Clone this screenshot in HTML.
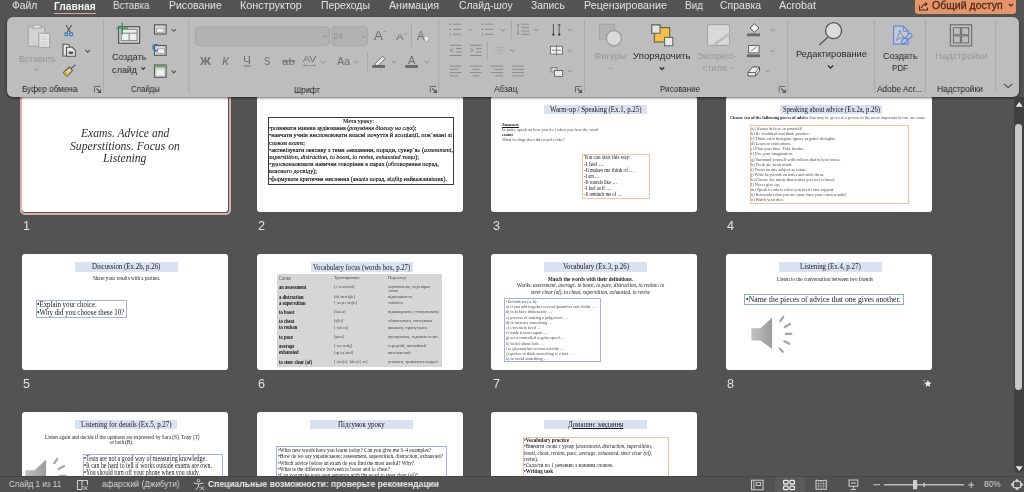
<!DOCTYPE html><html><head><meta charset="utf-8"><style>
html,body{margin:0;padding:0;}
body{width:1024px;height:492px;overflow:hidden;position:relative;background:#525352;font-family:'Liberation Sans', sans-serif;}
.t{position:absolute;white-space:nowrap;line-height:1;transform-origin:0 0;will-change:transform;}
.r{position:absolute;}
svg.r{overflow:visible;}
.sl{position:absolute;background:#fff;border-radius:3px;overflow:hidden;width:206px;height:116px;}
.sl .t{will-change:auto;}
.sl{will-change:transform;}
</style></head><body>
<div class="r" style="left:0px;top:0px;width:1024px;height:17px;background:#535453;"></div>
<div class="t" style="left:12.00px;top:1.44px;font-size:10.3px;font-weight:normal;font-family:'Liberation Sans', sans-serif;font-style:normal;color:#e2e2e2;transform:scaleX(0.9831);">Файл</div>
<div class="t" style="left:53.60px;top:1.53px;font-size:10.2px;font-weight:bold;font-family:'Liberation Sans', sans-serif;font-style:normal;color:#f6f6f6;transform:scaleX(1.0087);">Главная</div>
<div class="t" style="left:112.50px;top:1.44px;font-size:10.3px;font-weight:normal;font-family:'Liberation Sans', sans-serif;font-style:normal;color:#e2e2e2;transform:scaleX(0.9535);">Вставка</div>
<div class="t" style="left:168.80px;top:1.44px;font-size:10.3px;font-weight:normal;font-family:'Liberation Sans', sans-serif;font-style:normal;color:#e2e2e2;transform:scaleX(1.0162);">Рисование</div>
<div class="t" style="left:239.70px;top:1.44px;font-size:10.3px;font-weight:normal;font-family:'Liberation Sans', sans-serif;font-style:normal;color:#e2e2e2;transform:scaleX(1.0525);">Конструктор</div>
<div class="t" style="left:320.60px;top:1.44px;font-size:10.3px;font-weight:normal;font-family:'Liberation Sans', sans-serif;font-style:normal;color:#e2e2e2;transform:scaleX(1.0125);">Переходы</div>
<div class="t" style="left:389.00px;top:1.44px;font-size:10.3px;font-weight:normal;font-family:'Liberation Sans', sans-serif;font-style:normal;color:#e2e2e2;transform:scaleX(1.0343);">Анимация</div>
<div class="t" style="left:459.00px;top:1.44px;font-size:10.3px;font-weight:normal;font-family:'Liberation Sans', sans-serif;font-style:normal;color:#e2e2e2;transform:scaleX(1.0058);">Слайд-шоу</div>
<div class="t" style="left:530.80px;top:1.44px;font-size:10.3px;font-weight:normal;font-family:'Liberation Sans', sans-serif;font-style:normal;color:#e2e2e2;transform:scaleX(0.9971);">Запись</div>
<div class="t" style="left:583.60px;top:1.44px;font-size:10.3px;font-weight:normal;font-family:'Liberation Sans', sans-serif;font-style:normal;color:#e2e2e2;transform:scaleX(1.0426);">Рецензирование</div>
<div class="t" style="left:684.70px;top:1.44px;font-size:10.3px;font-weight:normal;font-family:'Liberation Sans', sans-serif;font-style:normal;color:#e2e2e2;transform:scaleX(0.9710);">Вид</div>
<div class="t" style="left:719.60px;top:1.44px;font-size:10.3px;font-weight:normal;font-family:'Liberation Sans', sans-serif;font-style:normal;color:#e2e2e2;transform:scaleX(1.0196);">Справка</div>
<div class="t" style="left:778.50px;top:1.44px;font-size:10.3px;font-weight:normal;font-family:'Liberation Sans', sans-serif;font-style:normal;color:#e2e2e2;transform:scaleX(1.0423);">Acrobat</div>
<div class="r" style="left:53.6px;top:12.6px;width:42.7px;height:1.6px;background:#d9a3a3;border-radius:1px;"></div>
<div class="r" style="left:914.5px;top:-4px;width:101.7px;height:18.3px;background:#e5956a;border-radius:3px;"></div>
<div class="t" style="left:931.70px;top:0.63px;font-size:10.2px;font-weight:normal;font-family:'Liberation Sans', sans-serif;font-style:normal;color:#4f2c1c;transform:scaleX(1.0314);-webkit-text-stroke:0.3px #4f2c1c;">Общий доступ</div>
<svg class="r" style="left:917px;top:1px;" width="12" height="10" viewBox="0 0 12 10"><path d="M2.5 4.5 V9 H10.5 V6.5" fill="none" stroke="#4a2818" stroke-width="1.1"/><path d="M4.5 7 Q5.5 3.2 9.5 3 M8 1.3 L10 3 L8 4.8" fill="none" stroke="#4a2818" stroke-width="1.1"/></svg>
<svg class="r" style="left:1008px;top:3px;" width="6" height="4" viewBox="0 0 6 4"><path d="M1 1 L3 3 L5 1" fill="none" stroke="#4a2818" stroke-width="1.1"/></svg>
<div class="r" style="left:19.5px;top:93.5px;width:211px;height:121px;border:2.5px solid #e2aea8;border-radius:5px;box-sizing:border-box;"></div>
<div class="sl" style="left:22px;top:96px;">
<div class="t" style="left:59.00px;top:31.57px;font-size:11.6px;font-weight:normal;font-family:'Liberation Serif', serif;font-style:italic;color:#2e2e2e;transform:scaleX(0.9997);">Exams. Advice and</div>
<div class="t" style="left:48.00px;top:44.67px;font-size:11.6px;font-weight:normal;font-family:'Liberation Serif', serif;font-style:italic;color:#2e2e2e;transform:scaleX(1.0056);">Superstitions. Focus on</div>
<div class="t" style="left:81.40px;top:56.77px;font-size:11.6px;font-weight:normal;font-family:'Liberation Serif', serif;font-style:italic;color:#2e2e2e;transform:scaleX(1.0053);">Listening</div>
</div>
<div class="t" style="left:23.20px;top:219.89px;font-size:12.6px;font-weight:normal;font-family:'Liberation Sans', sans-serif;font-style:normal;color:#e2e2e2;">1</div>
<div class="sl" style="left:256.7px;top:96px;">
<div class="r" style="left:10.5px;top:21px;width:186.5px;height:67.5px;border:1px solid #3a3a3a;box-sizing:border-box;"></div>
<div class="t" style="left:85.80px;top:22.32px;font-size:6.72px;font-weight:bold;font-family:'Liberation Serif', serif;font-style:normal;color:#1a1a1a;transform:scaleX(0.8287);">Мета уроку:</div>
<div class="t" style="left:12.40px;top:29.12px;font-size:6.72px;font-weight:normal;font-family:'Liberation Serif', serif;font-style:normal;color:#000;transform:scaleX(0.8846);-webkit-text-stroke:0.12px #000;">•розвивати навики аудіювання (<i>розуміння діалогу на слух</i>);</div>
<div class="t" style="left:12.40px;top:36.32px;font-size:6.72px;font-weight:normal;font-family:'Liberation Serif', serif;font-style:normal;color:#000;transform:scaleX(0.9364);-webkit-text-stroke:0.12px #000;">•навчати учнів висловлювати власні почуття й асоціації, пов`язані зі</div>
<div class="t" style="left:12.40px;top:43.52px;font-size:6.72px;font-weight:normal;font-family:'Liberation Serif', serif;font-style:normal;color:#000;transform:scaleX(0.8855);-webkit-text-stroke:0.12px #000;">словом <i>exams</i>;</div>
<div class="t" style="left:12.40px;top:50.72px;font-size:6.72px;font-weight:normal;font-family:'Liberation Serif', serif;font-style:normal;color:#000;transform:scaleX(0.9175);-webkit-text-stroke:0.12px #000;">•активізувати лексику з теми «екзамени, поради, сувер`я» (<i>assessment,</i></div>
<div class="t" style="left:12.40px;top:57.92px;font-size:6.72px;font-weight:normal;font-family:'Liberation Serif', serif;font-style:normal;color:#000;transform:scaleX(0.9044);-webkit-text-stroke:0.12px #000;"><i>superstition, distraction, to boost, to revise, exhausted</i> тощо);</div>
<div class="t" style="left:12.40px;top:65.12px;font-size:6.72px;font-weight:normal;font-family:'Liberation Serif', serif;font-style:normal;color:#000;transform:scaleX(0.9118);-webkit-text-stroke:0.12px #000;">•удосконалювати навички говоріння в парах (обговорення порад,</div>
<div class="t" style="left:12.40px;top:72.32px;font-size:6.72px;font-weight:normal;font-family:'Liberation Serif', serif;font-style:normal;color:#000;transform:scaleX(0.9083);-webkit-text-stroke:0.12px #000;">власного досвіду);</div>
<div class="t" style="left:12.40px;top:79.52px;font-size:6.72px;font-weight:normal;font-family:'Liberation Serif', serif;font-style:normal;color:#000;transform:scaleX(0.8823);-webkit-text-stroke:0.12px #000;">•формувати критичне мислення (аналіз порад, відбір найважливіших).</div>
</div>
<div class="t" style="left:257.90px;top:219.89px;font-size:12.6px;font-weight:normal;font-family:'Liberation Sans', sans-serif;font-style:normal;color:#e2e2e2;">2</div>
<div class="sl" style="left:491.3px;top:96px;">
<div class="r" style="left:53px;top:8.5px;width:102.5px;height:9.1px;background:#dae1f0;"></div>
<div class="t" style="left:58.70px;top:9.57px;font-size:7.39px;font-weight:normal;font-family:'Liberation Serif', serif;font-style:normal;color:#1a1a1a;transform:scaleX(0.9343);">Warm-up / Speaking (Ex.1, p.25)</div>
<div class="t" style="left:11.00px;top:27.20px;font-size:4.82px;font-weight:bold;font-family:'Liberation Serif', serif;font-style:normal;color:#1a1a1a;transform:scaleX(0.7716);text-decoration:underline;">Завдання:</div>
<div class="t" style="left:11.00px;top:32.30px;font-size:4.82px;font-weight:normal;font-family:'Liberation Serif', serif;font-style:normal;color:#4a4a4a;transform:scaleX(0.8890);">In pairs, speak on how you feel when you hear the word</div>
<div class="t" style="left:11.00px;top:37.30px;font-size:4.82px;font-weight:bold;font-family:'Liberation Serif', serif;font-style:normal;color:#1a1a1a;transform:scaleX(0.8564);">exams</div>
<div class="t" style="left:11.00px;top:42.20px;font-size:4.82px;font-weight:normal;font-family:'Liberation Serif', serif;font-style:normal;color:#4a4a4a;transform:scaleX(0.8835);">What feelings does this word evoke?</div>
<div class="r" style="left:91px;top:57.9px;width:68.2px;height:45.6px;border:1px solid #f4bf9c;box-sizing:border-box;"></div>
<div class="t" style="left:92.50px;top:59.47px;font-size:5.94px;font-weight:normal;font-family:'Liberation Serif', serif;font-style:normal;color:#1a1a1a;transform:scaleX(0.8605);">You can start this way:</div>
<div class="t" style="left:92.50px;top:65.57px;font-size:5.94px;font-weight:normal;font-family:'Liberation Serif', serif;font-style:normal;color:#1a1a1a;transform:scaleX(0.9189);">-I feel …</div>
<div class="t" style="left:92.50px;top:71.67px;font-size:5.94px;font-weight:normal;font-family:'Liberation Serif', serif;font-style:normal;color:#1a1a1a;transform:scaleX(0.8574);">-It makes me think of …</div>
<div class="t" style="left:92.50px;top:77.77px;font-size:5.94px;font-weight:normal;font-family:'Liberation Serif', serif;font-style:normal;color:#1a1a1a;transform:scaleX(0.7702);">-I am …</div>
<div class="t" style="left:92.50px;top:83.87px;font-size:5.94px;font-weight:normal;font-family:'Liberation Serif', serif;font-style:normal;color:#1a1a1a;transform:scaleX(0.7970);">-It sounds like …</div>
<div class="t" style="left:92.50px;top:89.97px;font-size:5.94px;font-weight:normal;font-family:'Liberation Serif', serif;font-style:normal;color:#1a1a1a;transform:scaleX(0.8105);">-I feel as if …</div>
<div class="t" style="left:92.50px;top:96.07px;font-size:5.94px;font-weight:normal;font-family:'Liberation Serif', serif;font-style:normal;color:#1a1a1a;transform:scaleX(0.7785);">-It reminds me of …</div>
</div>
<div class="t" style="left:492.50px;top:219.89px;font-size:12.6px;font-weight:normal;font-family:'Liberation Sans', sans-serif;font-style:normal;color:#e2e2e2;">3</div>
<div class="sl" style="left:726px;top:96px;">
<div class="r" style="left:53.6px;top:8.5px;width:102.4px;height:9.5px;background:#dae1f0;"></div>
<div class="t" style="left:57.00px;top:9.97px;font-size:7.39px;font-weight:normal;font-family:'Liberation Serif', serif;font-style:normal;color:#1a1a1a;transform:scaleX(0.9055);">Speaking about advice (Ex.2a, p.26)</div>
<div class="t" style="left:3.60px;top:20.30px;font-size:4.82px;font-weight:normal;font-family:'Liberation Serif', serif;font-style:normal;color:#1a1a1a;transform:scaleX(0.8832);"><b>Choose ten of the following pieces of advice</b> <span style="color:#555">that may be given to a person as the most important before an exam:</span></div>
<div class="r" style="left:23.7px;top:28.5px;width:159.0px;height:79.7px;border:1px solid #f4bf9c;box-sizing:border-box;"></div>
<div class="t" style="left:25.20px;top:30.94px;font-size:4.77px;font-weight:normal;font-family:'Liberation Serif', serif;font-style:normal;color:#4a4a4a;transform:scaleX(0.8929);">a) Always believe in yourself!</div>
<div class="t" style="left:25.20px;top:36.04px;font-size:4.77px;font-weight:normal;font-family:'Liberation Serif', serif;font-style:normal;color:#4a4a4a;transform:scaleX(0.8929);">b) Be confident and think positive.</div>
<div class="t" style="left:25.20px;top:41.14px;font-size:4.77px;font-weight:normal;font-family:'Liberation Serif', serif;font-style:normal;color:#4a4a4a;transform:scaleX(0.8929);">c) Think calm thoughts; ignore negative thoughts.</div>
<div class="t" style="left:25.20px;top:46.24px;font-size:4.77px;font-weight:normal;font-family:'Liberation Serif', serif;font-style:normal;color:#4a4a4a;transform:scaleX(0.8929);">d) Learn to concentrate.</div>
<div class="t" style="left:25.20px;top:51.34px;font-size:4.77px;font-weight:normal;font-family:'Liberation Serif', serif;font-style:normal;color:#4a4a4a;transform:scaleX(0.8929);">e) Plan your time. Take breaks.</div>
<div class="t" style="left:25.20px;top:56.44px;font-size:4.77px;font-weight:normal;font-family:'Liberation Serif', serif;font-style:normal;color:#4a4a4a;transform:scaleX(0.8929);">f) Use your imagination.</div>
<div class="t" style="left:25.20px;top:61.54px;font-size:4.77px;font-weight:normal;font-family:'Liberation Serif', serif;font-style:normal;color:#4a4a4a;transform:scaleX(0.8929);">g) Surround yourself with colours that help to stress.</div>
<div class="t" style="left:25.20px;top:66.64px;font-size:4.77px;font-weight:normal;font-family:'Liberation Serif', serif;font-style:normal;color:#4a4a4a;transform:scaleX(0.8929);">h) Fresh air, fresh mind.</div>
<div class="t" style="left:25.20px;top:71.74px;font-size:4.77px;font-weight:normal;font-family:'Liberation Serif', serif;font-style:normal;color:#4a4a4a;transform:scaleX(0.8929);">i) Focus on one subject at a time.</div>
<div class="t" style="left:25.20px;top:76.84px;font-size:4.77px;font-weight:normal;font-family:'Liberation Serif', serif;font-style:normal;color:#4a4a4a;transform:scaleX(0.8929);">j) Write keywords on notes and stick them.</div>
<div class="t" style="left:25.20px;top:81.94px;font-size:4.77px;font-weight:normal;font-family:'Liberation Serif', serif;font-style:normal;color:#4a4a4a;transform:scaleX(0.8929);">k) Choose the music that makes you feel relaxed.</div>
<div class="t" style="left:25.20px;top:87.04px;font-size:4.77px;font-weight:normal;font-family:'Liberation Serif', serif;font-style:normal;color:#4a4a4a;transform:scaleX(0.8929);">l) Never give up.</div>
<div class="t" style="left:25.20px;top:92.14px;font-size:4.77px;font-weight:normal;font-family:'Liberation Serif', serif;font-style:normal;color:#4a4a4a;transform:scaleX(0.8929);">m) Speak to others when you need extra support.</div>
<div class="t" style="left:25.20px;top:97.24px;font-size:4.77px;font-weight:normal;font-family:'Liberation Serif', serif;font-style:normal;color:#4a4a4a;transform:scaleX(0.8929);">n) Remember that you are more than your exam results!</div>
<div class="t" style="left:25.20px;top:102.34px;font-size:4.77px;font-weight:normal;font-family:'Liberation Serif', serif;font-style:normal;color:#4a4a4a;transform:scaleX(0.8929);">o) Watch your diet.</div>
</div>
<div class="t" style="left:727.20px;top:219.89px;font-size:12.6px;font-weight:normal;font-family:'Liberation Sans', sans-serif;font-style:normal;color:#e2e2e2;">4</div>
<div class="sl" style="left:22px;top:254px;">
<div class="r" style="left:53px;top:8.3px;width:103px;height:9.4px;background:#dae1f0;"></div>
<div class="t" style="left:70.30px;top:9.47px;font-size:7.39px;font-weight:normal;font-family:'Liberation Serif', serif;font-style:normal;color:#1a1a1a;transform:scaleX(0.9352);">Discussion (Ex.2b, p.26)</div>
<div class="t" style="left:70.80px;top:21.78px;font-size:5.69px;font-weight:normal;font-family:'Liberation Serif', serif;font-style:normal;color:#1a1a1a;transform:scaleX(0.8938);">Share your results with a partner.</div>
<div class="r" style="left:14.2px;top:46px;width:91.2px;height:18.2px;border:1px solid #9fb3de;box-sizing:border-box;"></div>
<div class="t" style="left:15.30px;top:46.60px;font-size:7.95px;font-weight:normal;font-family:'Liberation Serif', serif;font-style:normal;color:#1a1a1a;transform:scaleX(0.8692);">•Explain your choice.</div>
<div class="t" style="left:15.30px;top:55.00px;font-size:7.95px;font-weight:normal;font-family:'Liberation Serif', serif;font-style:normal;color:#1a1a1a;transform:scaleX(0.8730);">•Why did you choose these 10?</div>
</div>
<div class="t" style="left:23.20px;top:377.89px;font-size:12.6px;font-weight:normal;font-family:'Liberation Sans', sans-serif;font-style:normal;color:#e2e2e2;">5</div>
<div class="sl" style="left:256.7px;top:254px;">
<div class="r" style="left:54.1px;top:8.3px;width:101.9px;height:10.1px;background:#dae1f0;"></div>
<div class="t" style="left:56.30px;top:9.97px;font-size:7.39px;font-weight:normal;font-family:'Liberation Serif', serif;font-style:normal;color:#1a1a1a;transform:scaleX(0.9217);">Vocabulary focus (words box, p.27)</div>
<div class="r" style="left:20.3px;top:20px;width:165.1px;height:92.7px;background:#d6d6d6;"></div>
<div class="t" style="left:22.00px;top:21.73px;font-size:5.15px;font-weight:normal;font-family:'Liberation Serif', serif;font-style:normal;color:#4a4a4a;transform:scaleX(0.8929);">Слово</div>
<div class="t" style="left:77.00px;top:21.91px;font-size:4.93px;font-weight:normal;font-family:'Liberation Serif', serif;font-style:normal;color:#4a4a4a;transform:scaleX(0.8929);">Транскрипція</div>
<div class="t" style="left:131.20px;top:21.91px;font-size:4.93px;font-weight:normal;font-family:'Liberation Serif', serif;font-style:normal;color:#4a4a4a;transform:scaleX(0.8929);">Переклад</div>
<div class="t" style="left:22.00px;top:30.73px;font-size:5.15px;font-weight:bold;font-family:'Liberation Serif', serif;font-style:normal;color:#111;transform:scaleX(0.8929);">an assessment</div>
<div class="t" style="left:77.00px;top:30.91px;font-size:4.93px;font-weight:normal;font-family:'Liberation Serif', serif;font-style:normal;color:#4a4a4a;transform:scaleX(0.8929);">[əˈsesmənt]</div>
<div class="t" style="left:131.20px;top:30.91px;font-size:4.93px;font-weight:normal;font-family:'Liberation Serif', serif;font-style:normal;color:#4a4a4a;transform:scaleX(0.8929);">оцінювання, перевірка</div>
<div class="t" style="left:131.20px;top:35.41px;font-size:4.93px;font-weight:normal;font-family:'Liberation Serif', serif;font-style:normal;color:#4a4a4a;transform:scaleX(0.8929);">знань</div>
<div class="t" style="left:22.00px;top:40.93px;font-size:5.15px;font-weight:bold;font-family:'Liberation Serif', serif;font-style:normal;color:#111;transform:scaleX(0.8929);">a distraction</div>
<div class="t" style="left:77.00px;top:41.11px;font-size:4.93px;font-weight:normal;font-family:'Liberation Serif', serif;font-style:normal;color:#4a4a4a;transform:scaleX(0.8929);">[dɪˈstrækʃn]</div>
<div class="t" style="left:131.20px;top:41.11px;font-size:4.93px;font-weight:normal;font-family:'Liberation Serif', serif;font-style:normal;color:#4a4a4a;transform:scaleX(0.8929);">відволікання</div>
<div class="t" style="left:22.00px;top:47.13px;font-size:5.15px;font-weight:bold;font-family:'Liberation Serif', serif;font-style:normal;color:#111;transform:scaleX(0.8929);">a superstition</div>
<div class="t" style="left:77.00px;top:47.31px;font-size:4.93px;font-weight:normal;font-family:'Liberation Serif', serif;font-style:normal;color:#4a4a4a;transform:scaleX(0.8929);">[ˌsuːpəˈstɪʃn]</div>
<div class="t" style="left:131.20px;top:47.31px;font-size:4.93px;font-weight:normal;font-family:'Liberation Serif', serif;font-style:normal;color:#4a4a4a;transform:scaleX(0.8929);">забобон</div>
<div class="t" style="left:22.00px;top:56.03px;font-size:5.15px;font-weight:bold;font-family:'Liberation Serif', serif;font-style:normal;color:#111;transform:scaleX(0.8929);">to boost</div>
<div class="t" style="left:77.00px;top:56.21px;font-size:4.93px;font-weight:normal;font-family:'Liberation Serif', serif;font-style:normal;color:#4a4a4a;transform:scaleX(0.8929);">[buːst]</div>
<div class="t" style="left:131.20px;top:56.21px;font-size:4.93px;font-weight:normal;font-family:'Liberation Serif', serif;font-style:normal;color:#4a4a4a;transform:scaleX(0.8929);">підвищувати, стимулювати</div>
<div class="t" style="left:22.00px;top:64.93px;font-size:5.15px;font-weight:bold;font-family:'Liberation Serif', serif;font-style:normal;color:#111;transform:scaleX(0.8929);">to cheat</div>
<div class="t" style="left:77.00px;top:65.11px;font-size:4.93px;font-weight:normal;font-family:'Liberation Serif', serif;font-style:normal;color:#4a4a4a;transform:scaleX(0.8929);">[tʃiːt]</div>
<div class="t" style="left:131.20px;top:65.11px;font-size:4.93px;font-weight:normal;font-family:'Liberation Serif', serif;font-style:normal;color:#4a4a4a;transform:scaleX(0.8929);">обманювати, списувати</div>
<div class="t" style="left:22.00px;top:71.33px;font-size:5.15px;font-weight:bold;font-family:'Liberation Serif', serif;font-style:normal;color:#111;transform:scaleX(0.8929);">to reckon</div>
<div class="t" style="left:77.00px;top:71.51px;font-size:4.93px;font-weight:normal;font-family:'Liberation Serif', serif;font-style:normal;color:#4a4a4a;transform:scaleX(0.8929);">[ˈrekən]</div>
<div class="t" style="left:131.20px;top:71.51px;font-size:4.93px;font-weight:normal;font-family:'Liberation Serif', serif;font-style:normal;color:#4a4a4a;transform:scaleX(0.8929);">вважати, припускати</div>
<div class="t" style="left:22.00px;top:80.73px;font-size:5.15px;font-weight:bold;font-family:'Liberation Serif', serif;font-style:normal;color:#111;transform:scaleX(0.8929);">to pace</div>
<div class="t" style="left:77.00px;top:80.91px;font-size:4.93px;font-weight:normal;font-family:'Liberation Serif', serif;font-style:normal;color:#4a4a4a;transform:scaleX(0.8929);">[peɪs]</div>
<div class="t" style="left:131.20px;top:80.91px;font-size:4.93px;font-weight:normal;font-family:'Liberation Serif', serif;font-style:normal;color:#4a4a4a;transform:scaleX(0.8929);">пропускати, задавати темп</div>
<div class="t" style="left:22.00px;top:89.53px;font-size:5.15px;font-weight:bold;font-family:'Liberation Serif', serif;font-style:normal;color:#111;transform:scaleX(0.8929);">average</div>
<div class="t" style="left:77.00px;top:89.71px;font-size:4.93px;font-weight:normal;font-family:'Liberation Serif', serif;font-style:normal;color:#4a4a4a;transform:scaleX(0.8929);">[ˈævərɪdʒ]</div>
<div class="t" style="left:131.20px;top:89.71px;font-size:4.93px;font-weight:normal;font-family:'Liberation Serif', serif;font-style:normal;color:#4a4a4a;transform:scaleX(0.8929);">середній, звичайний</div>
<div class="t" style="left:22.00px;top:96.33px;font-size:5.15px;font-weight:bold;font-family:'Liberation Serif', serif;font-style:normal;color:#111;transform:scaleX(0.8929);">exhausted</div>
<div class="t" style="left:77.00px;top:96.51px;font-size:4.93px;font-weight:normal;font-family:'Liberation Serif', serif;font-style:normal;color:#4a4a4a;transform:scaleX(0.8929);">[ɪɡˈzɔːstɪd]</div>
<div class="t" style="left:131.20px;top:96.51px;font-size:4.93px;font-weight:normal;font-family:'Liberation Serif', serif;font-style:normal;color:#4a4a4a;transform:scaleX(0.8929);">виснажений</div>
<div class="t" style="left:22.00px;top:105.73px;font-size:5.15px;font-weight:bold;font-family:'Liberation Serif', serif;font-style:normal;color:#111;transform:scaleX(0.8929);">to steer clear (of)</div>
<div class="t" style="left:77.00px;top:105.91px;font-size:4.93px;font-weight:normal;font-family:'Liberation Serif', serif;font-style:normal;color:#4a4a4a;transform:scaleX(0.8929);">[ˌstɪə(r) ˈklɪə(r) əv]</div>
<div class="t" style="left:131.20px;top:105.91px;font-size:4.93px;font-weight:normal;font-family:'Liberation Serif', serif;font-style:normal;color:#4a4a4a;transform:scaleX(0.8929);">уникати, триматися подалі</div>
</div>
<div class="t" style="left:257.90px;top:377.89px;font-size:12.6px;font-weight:normal;font-family:'Liberation Sans', sans-serif;font-style:normal;color:#e2e2e2;">6</div>
<div class="sl" style="left:491.3px;top:254px;">
<div class="r" style="left:53.1px;top:8.3px;width:103.3px;height:9.4px;background:#dae1f0;"></div>
<div class="t" style="left:71.50px;top:9.47px;font-size:7.39px;font-weight:normal;font-family:'Liberation Serif', serif;font-style:normal;color:#1a1a1a;transform:scaleX(0.9358);">Vocabulary (Ex.3, p.26)</div>
<div class="t" style="left:56.70px;top:21.89px;font-size:6.16px;font-weight:bold;font-family:'Liberation Serif', serif;font-style:normal;color:#1a1a1a;transform:scaleX(0.8293);">Match the words with their definitions.</div>
<div class="t" style="left:25.50px;top:28.49px;font-size:6.16px;font-weight:normal;font-family:'Liberation Serif', serif;font-style:normal;color:#1a1a1a;transform:scaleX(0.8327);">Words: <i>assessment, average, to boost, to pace, distraction, to reckon, to</i></div>
<div class="t" style="left:40.30px;top:34.99px;font-size:6.16px;font-weight:normal;font-family:'Liberation Serif', serif;font-style:normal;color:#1a1a1a;transform:scaleX(0.8312);"><i>steer clear (of), to cheat, superstition, exhausted, to revise</i></div>
<div class="r" style="left:13px;top:44.3px;width:96.7px;height:64.2px;border:1px solid #9fb3de;box-sizing:border-box;"></div>
<div class="t" style="left:14.80px;top:45.90px;font-size:4.7px;font-weight:normal;font-family:'Liberation Serif', serif;font-style:normal;color:#4a4a4a;transform:scaleX(0.8929);">•Definitions (a–k):</div>
<div class="t" style="left:14.80px;top:51.10px;font-size:4.7px;font-weight:normal;font-family:'Liberation Serif', serif;font-style:normal;color:#4a4a4a;transform:scaleX(0.8929);">a) if you add together several quantities and divide …</div>
<div class="t" style="left:14.80px;top:56.30px;font-size:4.7px;font-weight:normal;font-family:'Liberation Serif', serif;font-style:normal;color:#4a4a4a;transform:scaleX(0.8929);">b) to behave dishonestly …</div>
<div class="t" style="left:14.80px;top:61.50px;font-size:4.7px;font-weight:normal;font-family:'Liberation Serif', serif;font-style:normal;color:#4a4a4a;transform:scaleX(0.8929);">c) process of making a judgement …</div>
<div class="t" style="left:14.80px;top:66.70px;font-size:4.7px;font-weight:normal;font-family:'Liberation Serif', serif;font-style:normal;color:#4a4a4a;transform:scaleX(0.8929);">d) to increase something …</div>
<div class="t" style="left:14.80px;top:71.90px;font-size:4.7px;font-weight:normal;font-family:'Liberation Serif', serif;font-style:normal;color:#4a4a4a;transform:scaleX(0.8929);">e) extremely tired …</div>
<div class="t" style="left:14.80px;top:77.10px;font-size:4.7px;font-weight:normal;font-family:'Liberation Serif', serif;font-style:normal;color:#4a4a4a;transform:scaleX(0.8929);">f) study lessons again …</div>
<div class="t" style="left:14.80px;top:82.30px;font-size:4.7px;font-weight:normal;font-family:'Liberation Serif', serif;font-style:normal;color:#4a4a4a;transform:scaleX(0.8929);">g) set a controlled regular speed …</div>
<div class="t" style="left:14.80px;top:87.50px;font-size:4.7px;font-weight:normal;font-family:'Liberation Serif', serif;font-style:normal;color:#4a4a4a;transform:scaleX(0.8929);">h) belief about luck …</div>
<div class="t" style="left:14.80px;top:92.70px;font-size:4.7px;font-weight:normal;font-family:'Liberation Serif', serif;font-style:normal;color:#4a4a4a;transform:scaleX(0.8929);">i) a pleasant but serious activity …</div>
<div class="t" style="left:14.80px;top:97.90px;font-size:4.7px;font-weight:normal;font-family:'Liberation Serif', serif;font-style:normal;color:#4a4a4a;transform:scaleX(0.8929);">j) spoken to think something is a fact …</div>
<div class="t" style="left:14.80px;top:103.10px;font-size:4.7px;font-weight:normal;font-family:'Liberation Serif', serif;font-style:normal;color:#4a4a4a;transform:scaleX(0.8929);">k) to avoid something …</div>
</div>
<div class="t" style="left:492.50px;top:377.89px;font-size:12.6px;font-weight:normal;font-family:'Liberation Sans', sans-serif;font-style:normal;color:#e2e2e2;">7</div>
<div class="sl" style="left:726px;top:254px;">
<div class="r" style="left:53px;top:8.3px;width:103px;height:9.4px;background:#dae1f0;"></div>
<div class="t" style="left:74.30px;top:9.47px;font-size:7.39px;font-weight:normal;font-family:'Liberation Serif', serif;font-style:normal;color:#1a1a1a;transform:scaleX(0.9347);">Listening (Ex.4, p.27)</div>
<div class="t" style="left:51.40px;top:22.56px;font-size:5.71px;font-weight:normal;font-family:'Liberation Serif', serif;font-style:normal;color:#1a1a1a;transform:scaleX(0.8993);">Listen to the conversation between two friends</div>
<div class="r" style="left:18.4px;top:39.6px;width:159.6px;height:11.1px;border:1px solid #8fa8d8;box-sizing:border-box;"></div>
<div class="t" style="left:20.00px;top:40.85px;font-size:8.62px;font-weight:normal;font-family:'Liberation Serif', serif;font-style:normal;color:#1a1a1a;transform:scaleX(0.8907);">•Name the pieces of advice that one gives another.</div>
<svg class="r" style="left:24.8px;top:62.5px;" width="45" height="40" viewBox="0 0 45 40"><defs><linearGradient id="spg" x1="0" y1="0" x2="1" y2="0"><stop offset="0" stop-color="#c2c2c2"/><stop offset="1" stop-color="#9c9c9c"/></linearGradient></defs><path d="M0.3 11.3 H9.5 L21.1 0.6 V32.1 L9.5 23.5 H0.3 Z" fill="url(#spg)"/><g stroke="#a6a6a6" stroke-width="2.2" stroke-linecap="round" fill="none"><path d="M29.2 4.2 L32.3 0"/><path d="M33.8 10 L39 7"/><path d="M34.8 16.9 H40.4"/><path d="M33.3 24.3 L38.4 26.8"/><path d="M28.7 31.6 L31.8 34.8"/></g></svg>
</div>
<div class="t" style="left:727.20px;top:377.89px;font-size:12.6px;font-weight:normal;font-family:'Liberation Sans', sans-serif;font-style:normal;color:#e2e2e2;">8</div>
<div class="sl" style="left:22px;top:412px;">
<div class="r" style="left:53.3px;top:8px;width:102.0px;height:9.1px;background:#dae1f0;"></div>
<div class="t" style="left:59.40px;top:8.97px;font-size:7.39px;font-weight:normal;font-family:'Liberation Serif', serif;font-style:normal;color:#1a1a1a;transform:scaleX(0.9390);">Listening for details (Ex.5, p.27)</div>
<div class="t" style="left:22.50px;top:22.55px;font-size:5.6px;font-weight:normal;font-family:'Liberation Serif', serif;font-style:normal;color:#1a1a1a;transform:scaleX(0.9220);">Listen again and decide if the opinions are expressed by Sara (S), Tony (T)</div>
<div class="t" style="left:87.50px;top:27.75px;font-size:5.6px;font-weight:normal;font-family:'Liberation Serif', serif;font-style:normal;color:#1a1a1a;transform:scaleX(0.8833);">or both (B).</div>
<div class="r" style="left:61.4px;top:41.9px;width:139.8px;height:98.1px;border:1px solid #9fb3de;box-sizing:border-box;"></div>
<div class="t" style="left:62.40px;top:42.67px;font-size:7.39px;font-weight:normal;font-family:'Liberation Serif', serif;font-style:normal;color:#1a1a1a;transform:scaleX(0.8062);">•Tests are not a good way of measuring knowledge.</div>
<div class="t" style="left:62.40px;top:49.77px;font-size:7.39px;font-weight:normal;font-family:'Liberation Serif', serif;font-style:normal;color:#1a1a1a;transform:scaleX(0.8047);">•It can be hard to tell if works outside exams are own.</div>
<div class="t" style="left:62.40px;top:56.87px;font-size:7.39px;font-weight:normal;font-family:'Liberation Serif', serif;font-style:normal;color:#1a1a1a;transform:scaleX(0.7987);">•You should turn off your phone when you study.</div>
<svg class="r" style="left:3.1px;top:46.7px;" width="45" height="40" viewBox="0 0 45 40"><defs><linearGradient id="spg" x1="0" y1="0" x2="1" y2="0"><stop offset="0" stop-color="#c2c2c2"/><stop offset="1" stop-color="#9c9c9c"/></linearGradient></defs><path d="M0.3 11.3 H9.5 L21.1 0.6 V32.1 L9.5 23.5 H0.3 Z" fill="url(#spg)"/><g stroke="#a6a6a6" stroke-width="2.2" stroke-linecap="round" fill="none"><path d="M29.2 4.2 L32.3 0"/><path d="M33.8 10 L39 7"/><path d="M34.8 16.9 H40.4"/><path d="M33.3 24.3 L38.4 26.8"/><path d="M28.7 31.6 L31.8 34.8"/></g></svg>
</div>
<div class="t" style="left:23.20px;top:535.89px;font-size:12.6px;font-weight:normal;font-family:'Liberation Sans', sans-serif;font-style:normal;color:#e2e2e2;">9</div>
<div class="sl" style="left:256.7px;top:412px;">
<div class="r" style="left:53px;top:8px;width:103.3px;height:9.1px;background:#dae1f0;"></div>
<div class="t" style="left:80.80px;top:8.97px;font-size:7.39px;font-weight:normal;font-family:'Liberation Serif', serif;font-style:normal;color:#1a1a1a;transform:scaleX(0.9358);">Підсумок уроку</div>
<div class="r" style="left:19.4px;top:34.2px;width:171.0px;height:105.8px;border:1px solid #9fb3de;box-sizing:border-box;"></div>
<div class="t" style="left:21.00px;top:35.39px;font-size:6.16px;font-weight:normal;font-family:'Liberation Serif', serif;font-style:normal;color:#1a1a1a;transform:scaleX(0.8359);">•What new words have you learnt today? Can you give me 3–4 examples?</div>
<div class="t" style="left:21.00px;top:41.49px;font-size:6.16px;font-weight:normal;font-family:'Liberation Serif', serif;font-style:normal;color:#1a1a1a;transform:scaleX(0.8396);">•How do we say українською: assessment, superstition, distraction, exhausted?</div>
<div class="t" style="left:21.00px;top:47.59px;font-size:6.16px;font-weight:normal;font-family:'Liberation Serif', serif;font-style:normal;color:#1a1a1a;transform:scaleX(0.8313);">•Which advice before an exam do you find the most useful? Why?</div>
<div class="t" style="left:21.00px;top:53.69px;font-size:6.16px;font-weight:normal;font-family:'Liberation Serif', serif;font-style:normal;color:#1a1a1a;transform:scaleX(0.8368);">•What is the difference between to boost and to cheat?</div>
<div class="t" style="left:21.00px;top:59.79px;font-size:6.16px;font-weight:normal;font-family:'Liberation Serif', serif;font-style:normal;color:#1a1a1a;transform:scaleX(0.8351);">•Can you make your own sentence with the word to steer clear (of)?</div>
</div>
<div class="t" style="left:257.90px;top:535.89px;font-size:12.6px;font-weight:normal;font-family:'Liberation Sans', sans-serif;font-style:normal;color:#e2e2e2;">10</div>
<div class="sl" style="left:491.3px;top:412px;">
<div class="r" style="left:53px;top:8px;width:103px;height:9.1px;background:#dae1f0;"></div>
<div class="t" style="left:77.20px;top:8.97px;font-size:7.39px;font-weight:normal;font-family:'Liberation Serif', serif;font-style:normal;color:#1a1a1a;transform:scaleX(0.9388);text-decoration:underline;">Домашнє завдання</div>
<div class="r" style="left:31.9px;top:25.2px;width:145.8px;height:114.8px;border:1px solid #f4bf9c;box-sizing:border-box;"></div>
<div class="t" style="left:33.40px;top:25.20px;font-size:6.38px;font-weight:normal;font-family:'Liberation Serif', serif;font-style:normal;color:#1a1a1a;transform:scaleX(0.7886);"><b>•Vocabulary practice</b></div>
<div class="t" style="left:33.40px;top:31.40px;font-size:6.38px;font-weight:normal;font-family:'Liberation Serif', serif;font-style:normal;color:#1a1a1a;transform:scaleX(0.7937);">•Вивчити слова з уроку (<i>assessment, distraction, superstition,</i></div>
<div class="t" style="left:33.40px;top:37.60px;font-size:6.38px;font-weight:normal;font-family:'Liberation Serif', serif;font-style:normal;color:#1a1a1a;transform:scaleX(0.7931);"><i>boost, cheat, reckon, pace, average, exhausted, steer clear (of),</i></div>
<div class="t" style="left:33.40px;top:43.80px;font-size:6.38px;font-weight:normal;font-family:'Liberation Serif', serif;font-style:normal;color:#1a1a1a;transform:scaleX(0.7479);"><i>revise</i>).</div>
<div class="t" style="left:33.40px;top:50.00px;font-size:6.38px;font-weight:normal;font-family:'Liberation Serif', serif;font-style:normal;color:#1a1a1a;transform:scaleX(0.7954);">•Скласти по 1 реченню з кожним словом.</div>
<div class="t" style="left:33.40px;top:56.20px;font-size:6.38px;font-weight:normal;font-family:'Liberation Serif', serif;font-style:normal;color:#1a1a1a;transform:scaleX(0.7911);"><b>•Writing task</b></div>
</div>
<div class="t" style="left:492.50px;top:535.89px;font-size:12.6px;font-weight:normal;font-family:'Liberation Sans', sans-serif;font-style:normal;color:#e2e2e2;">11</div>
<div class="r" style="left:6.5px;top:17px;width:1012.5px;height:80px;background:#bdbdbd;border-radius:6px;box-shadow:0 1px 3px rgba(0,0,0,.6);"></div>
<svg class="r" style="left:0;top:0" width="1024" height="100" viewBox="0 0 1024 100"><rect x="103.1" y="20" width="1" height="73" fill="#a9a9a9"/><rect x="188.5" y="20" width="1" height="73" fill="#a9a9a9"/><rect x="438.2" y="20" width="1" height="73" fill="#a9a9a9"/><rect x="584.0" y="20" width="1" height="73" fill="#a9a9a9"/><rect x="787.2" y="20" width="1" height="73" fill="#a9a9a9"/><rect x="873.9" y="20" width="1" height="73" fill="#a9a9a9"/><rect x="924.9" y="20" width="1" height="73" fill="#a9a9a9"/><rect x="995.1" y="20" width="1" height="73" fill="#a9a9a9"/><rect x="410.9" y="24.2" width="1" height="23.400000000000002" fill="#a9a9a9"/><rect x="367.0" y="51.9" width="1" height="19.800000000000004" fill="#a9a9a9"/><rect x="510.8" y="20" width="1" height="19.5" fill="#a9a9a9"/><rect x="486.8" y="41.4" width="1" height="19.6" fill="#a9a9a9"/><path d="M94.5 92.5 V86.5 H100.5" fill="none" stroke="#6a6a6a" stroke-width="1"/><path d="M96.5 88.5 L100.5 92.5 M100.5 89.5 V92.5 H97.5" fill="none" stroke="#555" stroke-width="1.1"/><path d="M430.3 92.5 V86.5 H436.3" fill="none" stroke="#6a6a6a" stroke-width="1"/><path d="M432.3 88.5 L436.3 92.5 M436.3 89.5 V92.5 H433.3" fill="none" stroke="#555" stroke-width="1.1"/><path d="M575.5 92.5 V86.5 H581.5" fill="none" stroke="#6a6a6a" stroke-width="1"/><path d="M577.5 88.5 L581.5 92.5 M581.5 89.5 V92.5 H578.5" fill="none" stroke="#555" stroke-width="1.1"/><path d="M779.2 92.5 V86.5 H785.2" fill="none" stroke="#6a6a6a" stroke-width="1"/><path d="M781.2 88.5 L785.2 92.5 M785.2 89.5 V92.5 H782.2" fill="none" stroke="#555" stroke-width="1.1"/><rect x="28.3" y="26.8" width="16.4" height="19.5" rx="1" fill="#d2d2d2" stroke="#a9a9a9" stroke-width="1.2"/><path d="M32.8 28.2 V25.2 H35.5 Q37 22.8 38.5 25.2 H41 V28.2 Z" fill="#e0e0e0" stroke="#a9a9a9" stroke-width="1.1"/><rect x="38.8" y="33.3" width="10.9" height="14.1" fill="#e4e4e4" stroke="#a9a9a9" stroke-width="1.2"/><path d="M41 37 H47.5" stroke="#c4c4c4" stroke-width="0.8"/><path d="M41 39.5 H47.5" stroke="#c4c4c4" stroke-width="0.8"/><path d="M41 42 H47.5" stroke="#c4c4c4" stroke-width="0.8"/><path d="M41 44.5 H47.5" stroke="#c4c4c4" stroke-width="0.8"/><path d="M34.8 68.45 L36.7 70.35000000000001 L38.6 68.45" fill="none" stroke="#a0a0a0" stroke-width="1.1"/><path d="M66 25 L70.6 32.6 M71.6 25 L67 32.6" stroke="#4a4a4a" stroke-width="1" fill="none"/><circle cx="66.4" cy="34.3" r="1.6" fill="none" stroke="#3f78bd" stroke-width="1.2"/><circle cx="71.2" cy="34.3" r="1.6" fill="none" stroke="#3f78bd" stroke-width="1.2"/><path d="M63 44.3 H68 L69.6 45.9 V56 H63 Z" fill="#e6e6e6" stroke="#555" stroke-width="1.1"/><path d="M66.5 47.3 H72.3 L75.3 50.3 V56.2 H66.5 Z" fill="#e6e6e6" stroke="#555" stroke-width="1.1"/><rect x="68.6" y="51.5" width="4.4" height="2.6" fill="#555"/><path d="M85.5 49.9 L87.7 52.1 L89.9 49.9" fill="none" stroke="#555" stroke-width="1.1"/><path d="M70.5 69 L75.5 64.8" stroke="#6b6b9a" stroke-width="1.6"/><path d="M63.5 72.5 L69.5 67 L72.5 70.5 L67 76.5 Z" fill="#e8d27a" stroke="#555" stroke-width="1.1"/><path d="M63.6 72.5 L67 76.5 L68.5 75 L65 71.2 Z" fill="#caa93a"/><rect x="118.6" y="26.7" width="21" height="16.6" fill="#d6d6d6" stroke="#555" stroke-width="1.2"/><rect x="121.2" y="29.3" width="15.8" height="11.4" fill="#eeeeee" stroke="#777" stroke-width="0.9"/><path d="M121.2 33.2 H137 M129.1 33.2 V40.7" stroke="#777" stroke-width="0.9"/><path d="M116.2 28.2 H128.2 M122.3 22.4 V34.4" stroke="#2f9a4a" stroke-width="1.3"/><path d="M141.4 67.45000000000002 L143.3 69.35 L145.2 67.45000000000002" fill="none" stroke="#333" stroke-width="1.1"/><rect x="154.5" y="24.8" width="11.6" height="9.2" fill="#d6d6d6" stroke="#555" stroke-width="1.1"/><rect x="156.6" y="28.2" width="7.4" height="4" fill="#f0f0f0" stroke="#888" stroke-width="0.6"/><path d="M171.6 29.099999999999998 L173.8 31.3 L176 29.099999999999998" fill="none" stroke="#555" stroke-width="1.1"/><rect x="154.5" y="45.5" width="11.6" height="9.8" fill="#d6d6d6" stroke="#555" stroke-width="1.1"/><rect x="157.8" y="48.8" width="6.5" height="4.8" fill="#f0f0f0" stroke="#888" stroke-width="0.6"/><path d="M158.6 46.2 A3 3 0 1 0 156 50.5" fill="none" stroke="#3f78bd" stroke-width="1.3"/><path d="M154.4 49 L156.2 51.4 L158 49.2" fill="none" stroke="#3f78bd" stroke-width="1.1"/><rect x="154.5" y="65" width="11.6" height="12.3" fill="#d6d6d6" stroke="#555" stroke-width="1.1"/><rect x="154.5" y="65" width="11.6" height="2.4" fill="#5fa36a"/><rect x="156.8" y="70" width="7" height="5" fill="#f0f0f0"/><path d="M171.6 70.69999999999999 L173.8 72.9 L176 70.69999999999999" fill="none" stroke="#555" stroke-width="1.1"/><rect x="195.5" y="26.9" width="133.8" height="18.5" rx="3" fill="#b2b2b2" stroke="#a6a6a6" stroke-width="1"/><rect x="331.9" y="26.9" width="35.8" height="18.5" rx="3" fill="#b2b2b2" stroke="#a6a6a6" stroke-width="1"/><path d="M323.3 35.70000000000001 L325.1 37.49999999999999 L326.9 35.70000000000001" fill="none" stroke="#8a8a8a" stroke-width="1"/><path d="M361.6 35.75000000000001 L363.3 37.449999999999996 L365 35.75000000000001" fill="none" stroke="#8a8a8a" stroke-width="1"/><path d="M383.5 32 L384.8 30.6 L386.1 32" fill="none" stroke="#8a8a8a" stroke-width="0.8"/><path d="M404.2 33 L405.5 34.4 L406.8 33" fill="none" stroke="#8a8a8a" stroke-width="0.8"/><path d="M426 35.6 L429.6 38.8 L426.5 42 L422.9 38.8 Z" fill="#eeeeee" stroke="#9a9a9a" stroke-width="0.8"/><path d="M243.6 66 H251" stroke="#6e6e6e" stroke-width="1"/><path d="M281.8 61 H295.2" stroke="#6e6e6e" stroke-width="1"/><path d="M303.2 65.6 H315.8 M303.2 65.6 L305 64.4 M315.8 65.6 L314 64.4" stroke="#8a8a8a" stroke-width="0.8" fill="none"/><path d="M320.5 60.75 L323.0 63.25 L325.5 60.75" fill="none" stroke="#8a8a8a" stroke-width="1"/><path d="M354.2 60.875 L356.45 63.125 L358.7 60.875" fill="none" stroke="#8a8a8a" stroke-width="1"/><path d="M375.5 63.5 L382.6 56.2 L385 58.6 L377.9 65.9 L375.2 66 Z" fill="#eaeaea" stroke="#6e6e6e" stroke-width="1"/><rect x="372.2" y="65" width="12.8" height="2.9" fill="#6a6a6a"/><rect x="405.2" y="65" width="12.8" height="2.9" fill="#6a6a6a"/><path d="M392 60.925 L394.15 63.075 L396.3 60.925" fill="none" stroke="#8a8a8a" stroke-width="1"/><path d="M424.6 60.92500000000001 L426.75 63.07499999999999 L428.9 60.92500000000001" fill="none" stroke="#8a8a8a" stroke-width="1"/><path d="M453 24.2 H461" stroke="#8a8a8a" stroke-width="1"/><path d="M453 29.3 H461" stroke="#8a8a8a" stroke-width="1"/><path d="M453 34.3 H461" stroke="#8a8a8a" stroke-width="1"/><circle cx="450" cy="24.2" r="0.9" fill="#8a8a8a"/><circle cx="450" cy="29.3" r="0.9" fill="#8a8a8a"/><circle cx="450" cy="34.3" r="0.9" fill="#8a8a8a"/><path d="M468.7 29.02499999999999 L470.65 30.97500000000001 L472.6 29.02499999999999" fill="none" stroke="#8a8a8a" stroke-width="1"/><path d="M485 24.2 H493.4" stroke="#8a8a8a" stroke-width="1"/><path d="M485 29.3 H493.4" stroke="#8a8a8a" stroke-width="1"/><path d="M485 34.3 H493.4" stroke="#8a8a8a" stroke-width="1"/><rect x="481.8" y="23.2" width="1.2" height="2" fill="#8a8a8a"/><rect x="481.8" y="28.3" width="1.2" height="2" fill="#8a8a8a"/><rect x="481.8" y="33.3" width="1.2" height="2" fill="#8a8a8a"/><path d="M500.5 28.875 L502.75 31.125 L505 28.875" fill="none" stroke="#8a8a8a" stroke-width="1"/><path d="M521.3 24.2 H529.1" stroke="#8a8a8a" stroke-width="1"/><path d="M521.3 27.6 H529.1" stroke="#8a8a8a" stroke-width="1"/><path d="M521.3 31 H529.1" stroke="#8a8a8a" stroke-width="1"/><path d="M521.3 34.3 H529.1" stroke="#8a8a8a" stroke-width="1"/><path d="M518 24 V34.5 M516.8 25.5 L518 24 L519.2 25.5 M516.8 33 L518 34.5 L519.2 33" stroke="#8a8a8a" stroke-width="0.9" fill="none"/><path d="M534.3 28.849999999999994 L536.5999999999999 31.150000000000006 L538.9 28.849999999999994" fill="none" stroke="#8a8a8a" stroke-width="1"/><path d="M449.8 45.3 H461.5" stroke="#8a8a8a" stroke-width="1"/><path d="M449.8 55.5 H461.5" stroke="#8a8a8a" stroke-width="1"/><path d="M456 48.6 H461.5" stroke="#8a8a8a" stroke-width="1"/><path d="M456 52 H461.5" stroke="#8a8a8a" stroke-width="1"/><path d="M453 48.6 L450 50.3 L453 52" stroke="#8a8a8a" stroke-width="0.9" fill="none"/><path d="M470 45.3 H481.7" stroke="#8a8a8a" stroke-width="1"/><path d="M470 55.5 H481.7" stroke="#8a8a8a" stroke-width="1"/><path d="M476 48.6 H481.7" stroke="#8a8a8a" stroke-width="1"/><path d="M476 52 H481.7" stroke="#8a8a8a" stroke-width="1"/><path d="M470.5 48.6 L473.5 50.3 L470.5 52" stroke="#8a8a8a" stroke-width="0.9" fill="none"/><path d="M494.8 47.5 H503.8 M494.8 50.3 H503.8 M494.8 53 H503.8 M499.3 47 V53.5" stroke="#acacac" stroke-width="0.9"/><path d="M510.3 49.375000000000014 L512.55 51.624999999999986 L514.8 49.375000000000014" fill="none" stroke="#8a8a8a" stroke-width="1"/><path d="M449.8 66.1 H461.5" stroke="#8a8a8a" stroke-width="1"/><path d="M449.8 72.6 H461.5" stroke="#8a8a8a" stroke-width="1"/><path d="M449.8 69.4 H458" stroke="#8a8a8a" stroke-width="1"/><path d="M449.8 75.9 H458" stroke="#8a8a8a" stroke-width="1"/><path d="M470 66.1 H481.7" stroke="#8a8a8a" stroke-width="1"/><path d="M470 72.6 H481.7" stroke="#8a8a8a" stroke-width="1"/><path d="M472.3 69.4 H479.4" stroke="#8a8a8a" stroke-width="1"/><path d="M472.3 75.9 H479.4" stroke="#8a8a8a" stroke-width="1"/><path d="M490.8 66.1 H503.1" stroke="#8a8a8a" stroke-width="1"/><path d="M490.8 72.6 H503.1" stroke="#8a8a8a" stroke-width="1"/><path d="M494.8 69.4 H503.1" stroke="#8a8a8a" stroke-width="1"/><path d="M494.8 75.9 H503.1" stroke="#8a8a8a" stroke-width="1"/><path d="M512.2 66.1 H523.9" stroke="#8a8a8a" stroke-width="1"/><path d="M512.2 69.4 H523.9" stroke="#8a8a8a" stroke-width="1"/><path d="M512.2 72.6 H523.9" stroke="#8a8a8a" stroke-width="1"/><path d="M512.2 75.9 H523.9" stroke="#8a8a8a" stroke-width="1"/><path d="M553.4 24 V34.5 M559.2 24 V34.5 M557.8 25.6 L559.2 24 L560.6 25.6" stroke="#555" stroke-width="1" fill="none"/><circle cx="553.4" cy="34.6" r="1.2" fill="#444"/><circle cx="559.2" cy="34.6" r="1.2" fill="#444"/><path d="M568 28.875 L570.25 31.125 L572.5 28.875" fill="none" stroke="#8a8a8a" stroke-width="1"/><rect x="550.5" y="46.3" width="12" height="7.8" fill="#efefef" stroke="#777" stroke-width="1"/><path d="M556.5 45 V55.5 M552 50.2 H561" stroke="#777" stroke-width="0.9"/><path d="M568 49.675 L570.25 51.925 L572.5 49.675" fill="none" stroke="#8a8a8a" stroke-width="1"/><path d="M551 67.5 H557 V72 H551 Z" fill="#cfcfcf" stroke="#777" stroke-width="0.9"/><rect x="554.5" y="70.5" width="8.2" height="6" fill="#e6e6e6" stroke="#666" stroke-width="0.9"/><path d="M568 69.875 L570.25 72.125 L572.5 69.875" fill="none" stroke="#8a8a8a" stroke-width="1"/><rect x="599.5" y="24.2" width="15" height="15" fill="#b3b3b3" stroke="#a5a5a5" stroke-width="1"/><circle cx="613.9" cy="38.2" r="7.6" fill="#dadada" stroke="#9a9a9a" stroke-width="1.3"/><path d="M608.7 67.32500000000002 L611.05 69.67499999999998 L613.4 67.32500000000002" fill="none" stroke="#9d9d9d" stroke-width="1"/><rect x="651.8" y="25" width="8.2" height="8.2" fill="#e4e4e4" stroke="#5f5f5f" stroke-width="1"/><rect x="654.4" y="27.6" width="15.3" height="14.4" fill="#f2c04a" stroke="#6f5f3a" stroke-width="1.1"/><rect x="651.8" y="25" width="8.2" height="8.2" fill="#e4e4e4" stroke="#5f5f5f" stroke-width="1"/><rect x="664.6" y="37.4" width="8.2" height="8.4" fill="#e8e8e8" stroke="#5f5f5f" stroke-width="1"/><path d="M659.8 67.3 L662 69.6 L664.2 67.3" fill="none" stroke="#333" stroke-width="1.4"/><rect x="707.5" y="24.6" width="22" height="20.8" rx="1.5" fill="#dadada" stroke="#a6a6a6" stroke-width="1.1"/><path d="M714 46.3 Q716 42 720 40.5 L730.5 32.8" fill="none" stroke="#a6a6a6" stroke-width="2.2"/><path d="M714 46.3 Q716 42 720 40.5 L730.5 32.8" fill="none" stroke="#e0e0e0" stroke-width="0.8"/><path d="M729.3 67.07499999999999 L731.15 68.92500000000001 L733 67.07499999999999" fill="none" stroke="#a0a0a0" stroke-width="1"/><path d="M750 28 L754.5 23.8 L759 28 L754.5 32.3 Z" fill="#f0f0f0" stroke="#555" stroke-width="1"/><rect x="746.9" y="33.4" width="13.1" height="2.9" fill="#6a6a6a"/><path d="M770.3 28.899999999999977 L772.5 31.100000000000023 L774.7 28.899999999999977" fill="none" stroke="#8a8a8a" stroke-width="1"/><rect x="748.5" y="45.5" width="10.6" height="7.4" fill="#ececec" stroke="#666" stroke-width="1"/><path d="M751 51 L756.5 47" stroke="#7a7a9a" stroke-width="0.9"/><rect x="746.9" y="54.4" width="13.1" height="2.8" fill="#6a6a6a"/><path d="M770.3 49.89999999999998 L772.5 52.10000000000002 L774.7 49.89999999999998" fill="none" stroke="#8a8a8a" stroke-width="1"/><path d="M748 72.5 L752.5 67 H759.5 V70.8 L755.5 76 H748 Z" fill="#ebebeb" stroke="#555" stroke-width="1"/><path d="M748 72.5 H755.5 L759.5 67 M755.5 72.5 V76" fill="none" stroke="#555" stroke-width="0.9"/><path d="M765.2 69.9 L767.4000000000001 72.1 L769.6 69.9" fill="none" stroke="#8a8a8a" stroke-width="1"/><circle cx="833.6" cy="30.7" r="8" fill="#dcdcdc" stroke="#555" stroke-width="1.3"/><path d="M819.3 45 L827.8 37.2" stroke="#555" stroke-width="1.3"/><path d="M828 65.5 L830.6 68 L833.2 65.5" fill="none" stroke="#333" stroke-width="1.4"/><path d="M893.6 26.2 H903.2 L908.2 31.2 V44.2 H893.6 Z" fill="#c6c9d2" stroke="#6688d6" stroke-width="1.2" stroke-linejoin="round"/><path d="M903.2 26.2 V31.2 H908.2" fill="none" stroke="#6688d6" stroke-width="1"/><path d="M896.5 40.5 C898 37 899.5 33 899.8 30 C900.3 33 902 36 905 37.5 C902 37.3 899 38.5 896.5 40.5 Z" fill="none" stroke="#6688d6" stroke-width="0.9"/><rect x="901" y="39.2" width="6.4" height="3.6" rx="1.8" transform="rotate(-45 904.2 41)" fill="#c6c9d2" stroke="#6688d6" stroke-width="1.2"/><rect x="906" y="34.4" width="6.4" height="3.6" rx="1.8" transform="rotate(-45 909.2 36.2)" fill="#c6c9d2" stroke="#6688d6" stroke-width="1.2"/><rect x="950.4" y="24.7" width="21.2" height="21.2" fill="none" stroke="#727272" stroke-width="1.2"/><rect x="953.4" y="27.7" width="7" height="7" fill="none" stroke="#727272" stroke-width="1.1"/><rect x="961.6" y="27.7" width="7" height="7" fill="none" stroke="#727272" stroke-width="1.1"/><rect x="953.4" y="35.9" width="7" height="7" fill="none" stroke="#727272" stroke-width="1.1"/><rect x="961.6" y="35.9" width="7" height="7" fill="none" stroke="#727272" stroke-width="1.1"/><path d="M1004 83.8 L1008.2 87.6 L1012.4 83.8" fill="none" stroke="#444" stroke-width="1.1"/></svg>
<div class="t" style="left:18.70px;top:53.61px;font-size:9.4px;font-weight:normal;font-family:'Liberation Sans', sans-serif;font-style:normal;color:#979797;transform:scaleX(0.9308);">Вставить</div>
<div class="t" style="left:21.60px;top:84.92px;font-size:8.8px;font-weight:normal;font-family:'Liberation Sans', sans-serif;font-style:normal;color:#262626;transform:scaleX(0.9250);">Буфер обмена</div>
<div class="t" style="left:112.40px;top:52.21px;font-size:9.4px;font-weight:normal;font-family:'Liberation Sans', sans-serif;font-style:normal;color:#2a2a2a;transform:scaleX(0.9596);">Создать</div>
<div class="t" style="left:112.40px;top:64.61px;font-size:9.4px;font-weight:normal;font-family:'Liberation Sans', sans-serif;font-style:normal;color:#2a2a2a;transform:scaleX(0.9581);">слайд</div>
<div class="t" style="left:131.00px;top:85.22px;font-size:8.8px;font-weight:normal;font-family:'Liberation Sans', sans-serif;font-style:normal;color:#262626;transform:scaleX(0.8733);">Слайды</div>
<div class="t" style="left:293.50px;top:85.52px;font-size:8.8px;font-weight:normal;font-family:'Liberation Sans', sans-serif;font-style:normal;color:#262626;transform:scaleX(0.8980);">Шрифт</div>
<div class="t" style="left:493.80px;top:84.52px;font-size:8.8px;font-weight:normal;font-family:'Liberation Sans', sans-serif;font-style:normal;color:#262626;transform:scaleX(0.9478);">Абзац</div>
<div class="t" style="left:593.70px;top:51.95px;font-size:9.0px;font-weight:normal;font-family:'Liberation Sans', sans-serif;font-style:normal;color:#979797;transform:scaleX(1.0634);">Фигуры</div>
<div class="t" style="left:633.20px;top:51.95px;font-size:9.0px;font-weight:normal;font-family:'Liberation Sans', sans-serif;font-style:normal;color:#2a2a2a;transform:scaleX(1.0735);">Упорядочить</div>
<div class="t" style="left:696.90px;top:51.95px;font-size:9.0px;font-weight:normal;font-family:'Liberation Sans', sans-serif;font-style:normal;color:#979797;transform:scaleX(0.9429);">Экспресс-</div>
<div class="t" style="left:702.70px;top:64.45px;font-size:9.0px;font-weight:normal;font-family:'Liberation Sans', sans-serif;font-style:normal;color:#979797;transform:scaleX(0.9817);">стили</div>
<div class="t" style="left:660.00px;top:84.52px;font-size:8.8px;font-weight:normal;font-family:'Liberation Sans', sans-serif;font-style:normal;color:#262626;transform:scaleX(0.9027);">Рисование</div>
<div class="t" style="left:795.90px;top:50.08px;font-size:9.2px;font-weight:normal;font-family:'Liberation Sans', sans-serif;font-style:normal;color:#2a2a2a;transform:scaleX(1.0143);">Редактирование</div>
<div class="t" style="left:883.00px;top:51.98px;font-size:9.2px;font-weight:normal;font-family:'Liberation Sans', sans-serif;font-style:normal;color:#2a2a2a;transform:scaleX(0.9851);">Создать</div>
<div class="t" style="left:891.80px;top:64.38px;font-size:9.2px;font-weight:normal;font-family:'Liberation Sans', sans-serif;font-style:normal;color:#2a2a2a;transform:scaleX(0.8762);">PDF</div>
<div class="t" style="left:877.00px;top:85.22px;font-size:8.8px;font-weight:normal;font-family:'Liberation Sans', sans-serif;font-style:normal;color:#262626;transform:scaleX(0.9462);">Adobe Acr...</div>
<div class="t" style="left:935.20px;top:51.98px;font-size:9.2px;font-weight:normal;font-family:'Liberation Sans', sans-serif;font-style:normal;color:#979797;transform:scaleX(1.0372);">Надстройки</div>
<div class="t" style="left:937.40px;top:85.22px;font-size:8.8px;font-weight:normal;font-family:'Liberation Sans', sans-serif;font-style:normal;color:#262626;transform:scaleX(0.9486);">Надстройки</div>
<div class="t" style="left:199.80px;top:55.95px;font-size:11px;font-weight:bold;font-family:'Liberation Sans', sans-serif;font-style:normal;color:#6e6e6e;transform:scaleX(1.0951);">Ж</div>
<div class="t" style="left:222.20px;top:55.95px;font-size:11px;font-weight:normal;font-family:'Liberation Sans', sans-serif;font-style:italic;color:#6e6e6e;transform:scaleX(1.0641);">К</div>
<div class="t" style="left:243.00px;top:55.38px;font-size:10.5px;font-weight:normal;font-family:'Liberation Sans', sans-serif;font-style:normal;color:#6e6e6e;transform:scaleX(1.1286);">Ч</div>
<div class="t" style="left:263.70px;top:55.95px;font-size:11px;font-weight:normal;font-family:'Liberation Sans', sans-serif;font-style:normal;color:#6e6e6e;transform:scaleX(0.8443);">S</div>
<div class="t" style="left:282.20px;top:56.72px;font-size:9.5px;font-weight:normal;font-family:'Liberation Sans', sans-serif;font-style:normal;color:#6e6e6e;transform:scaleX(1.2100);">ab</div>
<div class="t" style="left:302.80px;top:55.19px;font-size:8.6px;font-weight:normal;font-family:'Liberation Sans', sans-serif;font-style:normal;color:#6e6e6e;transform:scaleX(1.2190);">AV</div>
<div class="t" style="left:337.20px;top:56.23px;font-size:11.5px;font-weight:normal;font-family:'Liberation Sans', sans-serif;font-style:normal;color:#6e6e6e;transform:scaleX(0.9234);">Aa</div>
<div class="t" style="left:333.00px;top:32.15px;font-size:9px;font-weight:normal;font-family:'Liberation Sans', sans-serif;font-style:normal;color:#8f8f8f;transform:scaleX(1.0184);">24</div>
<div class="t" style="left:373.60px;top:28.58px;font-size:13.2px;font-weight:normal;font-family:'Liberation Sans', sans-serif;font-style:normal;color:#6e6e6e;transform:scaleX(1.0117);">A</div>
<div class="t" style="left:395.80px;top:31.81px;font-size:9.4px;font-weight:normal;font-family:'Liberation Sans', sans-serif;font-style:normal;color:#6e6e6e;transform:scaleX(1.2130);">A</div>
<div class="t" style="left:416.80px;top:28.58px;font-size:13.2px;font-weight:normal;font-family:'Liberation Sans', sans-serif;font-style:normal;color:#6e6e6e;transform:scaleX(0.8867);">A</div>
<div class="t" style="left:408.30px;top:54.72px;font-size:10.8px;font-weight:normal;font-family:'Liberation Sans', sans-serif;font-style:normal;color:#6e6e6e;transform:scaleX(1.0273);">A</div>
<div class="r" style="left:0px;top:476px;width:1024px;height:16px;background:#515151;border-top:1px solid #474747;box-sizing:border-box;"></div>
<div class="t" style="left:8.80px;top:480.32px;font-size:8.8px;font-weight:normal;font-family:'Liberation Sans', sans-serif;font-style:normal;color:#d6d6d6;transform:scaleX(0.9201);">Слайд 1 из 11</div>
<div class="t" style="left:102.00px;top:480.32px;font-size:8.8px;font-weight:normal;font-family:'Liberation Sans', sans-serif;font-style:normal;color:#d6d6d6;transform:scaleX(0.9309);">афарский (Джибути)</div>
<div class="t" style="left:207.50px;top:480.32px;font-size:8.8px;font-weight:bold;font-family:'Liberation Sans', sans-serif;font-style:normal;color:#ececec;transform:scaleX(0.9719);">Специальные возможности: проверьте рекомендации</div>
<div class="t" style="left:984.00px;top:480.32px;font-size:8.8px;font-weight:normal;font-family:'Liberation Sans', sans-serif;font-style:normal;color:#d6d6d6;transform:scaleX(0.9484);">80%</div>
<div class="r" style="left:775.3px;top:477px;width:30px;height:15px;background:#5a5a5a;"></div>
<svg class="r" style="left:0;top:0" width="1024" height="492" viewBox="0 0 1024 492"><path d="M77.5 480.5 H82 V489.5 H77.5 Z M82 480.5 H87.5 V485" fill="none" stroke="#d2d2d2" stroke-width="1"/><path d="M83.5 486 L87.5 490 M87.5 486 L83.5 490" stroke="#d2d2d2" stroke-width="1"/><circle cx="198.5" cy="480.8" r="1.3" fill="none" stroke="#d2d2d2" stroke-width="0.9"/><path d="M193.5 483 L198.5 484 L203.5 483 M198.5 484 V486.5 L195.5 490 M198.5 486.5 L199.5 487.5" fill="none" stroke="#d2d2d2" stroke-width="1"/><path d="M200.5 486.5 L204 490 M204 486.5 L200.5 490" stroke="#d2d2d2" stroke-width="1"/><rect x="751.5" y="480.2" width="11.6" height="9.6" fill="none" stroke="#d2d2d2" stroke-width="1"/><path d="M753.9 480.5 V489.5" stroke="#d2d2d2" stroke-width="0.9"/><rect x="756.2" y="482.6" width="4.4" height="3" fill="none" stroke="#d2d2d2" stroke-width="0.9"/><rect x="783.6" y="480.4" width="4.4" height="3.6" rx="0.8" fill="none" stroke="#ececec" stroke-width="1.3"/><rect x="790" y="480.4" width="4.4" height="3.6" rx="0.8" fill="none" stroke="#ececec" stroke-width="1.3"/><rect x="783.6" y="486.1" width="4.4" height="3.6" rx="0.8" fill="none" stroke="#ececec" stroke-width="1.3"/><rect x="790" y="486.1" width="4.4" height="3.6" rx="0.8" fill="none" stroke="#ececec" stroke-width="1.3"/><path d="M816 480 Q818.5 481 821 480.5 Q823.5 481 826.3 480 V489.5 Q823.5 488.7 821 489.5 Q818.5 488.7 816 489.5 Z" fill="none" stroke="#d2d2d2" stroke-width="1"/><path d="M818.5 481 V489 M821 481 V489 M823.5 481 V489 M816.5 483.5 H826 M816.5 486 H826" stroke="#b0b0b0" stroke-width="0.6"/><rect x="849" y="480" width="8.8" height="6.2" fill="none" stroke="#d2d2d2" stroke-width="1"/><path d="M851 483 H855.8 M853.4 486.2 V489.6 M850.8 489.6 H856" stroke="#d2d2d2" stroke-width="1"/><path d="M873.3 484.7 H880" stroke="#c2c2c2" stroke-width="1.1"/><rect x="884" y="484" width="80" height="1.5" fill="#bdbdbd"/><rect x="913" y="480.1" width="4.2" height="9.1" rx="0.5" fill="#d0d0d0"/><rect x="923.4" y="482.8" width="1.5" height="4.2" fill="#c8c8c8"/><path d="M968.3 484.9 H974 M971.15 481.9 V488" stroke="#c2c2c2" stroke-width="1.1"/><path d="M1017 478.8 L1019.3 481.2 H1014.7 Z M1017 490.4 L1019.3 488 H1014.7 Z M1010.6 484.6 L1013 482.3 V486.9 Z M1023.4 484.6 L1021 482.3 V486.9 Z" fill="#d2d2d2"/><rect x="1013.5" y="481.6" width="7" height="6" fill="none" stroke="#d2d2d2" stroke-width="1"/></svg>
<svg class="r" style="left:920px;top:378px;" width="12" height="10" viewBox="0 0 12 10"><path d="M7.9 1.8 L9 4.4 L11.6 4.6 L9.6 6.4 L10.2 9 L7.9 7.6 L5.6 9 L6.2 6.4 L4.2 4.6 L6.8 4.4 Z" fill="#f2f2f2"/><path d="M2.6 2.6 H5.8 M3 6.2 H4.6" stroke="#9a9a9a" stroke-width="0.9"/></svg>
<div class="r" style="left:1013.5px;top:97px;width:10.5px;height:376px;background:#404040;border-radius:0 0 5px 5px;"></div>
<div class="r" style="left:1015.4px;top:124px;width:7.1px;height:266px;background:#c8c8c8;border-radius:3.5px;"></div>
<svg class="r" style="left:1013.5px;top:97px;" width="10.5" height="376" viewBox="0 0 10.5 376"><path d="M5.25 5 L8.8 9.7 H1.7 Z" fill="#e6e6e6"/><path d="M5.25 374 L8.8 369.3 H1.7 Z" fill="#e6e6e6"/></svg>
</body></html>
